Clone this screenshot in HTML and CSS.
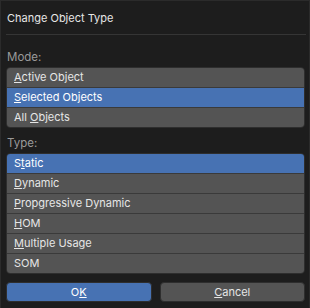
FILE: index.html
```html
<!DOCTYPE html>
<html lang="en">
<head>
    <meta charset="UTF-8">
    <meta name="viewport" content="width=device-width, initial-scale=1.0">
    <title>Change Object Type</title>
    <link rel="stylesheet" href="styles.css">
</head>
<body>
    <div class="dialog">
        <!-- Title -->
        <div class="dialog-title">Change Object Type</div>
        <div class="separator"></div>

        <!-- Mode -->
        <div class="section-label">Mode:</div>
        <div class="option-list">
            <div class="option"><u>A</u>ctive Object</div>
            <div class="option selected"><u>S</u>elected Objects</div>
            <div class="option">All <u>O</u>bjects</div>
        </div>

        <!-- Type -->
        <div class="section-label">Type:</div>
        <div class="option-list">
            <div class="option selected">S<u>t</u>atic</div>
            <div class="option"><u>D</u>ynamic</div>
            <div class="option"><u>P</u>ropgressive Dynamic</div>
            <div class="option"><u>H</u>OM</div>
            <div class="option"><u>M</u>ultiple Usage</div>
            <div class="option">SOM</div>
        </div>

        <!-- Buttons -->
        <div class="buttons">
            <button class="btn btn-ok">O<u>K</u></button>
            <button class="btn"><u>C</u>ancel</button>
        </div>
    </div>
</body>
</html>
```

FILE: styles.css
```css
body {
    margin: 0;
    background-color: #1d1d1d;
    font-family: Inter, "DejaVu Sans", sans-serif;
    font-size: 11px;
    color: #e6e6e6;
}

u {
    text-decoration: underline;
    text-decoration-thickness: 1px;
    text-underline-offset: 1px;
}

/* Popup window */
.dialog {
    box-sizing: border-box;
    width: 310px;
    height: 308px;
    border: 1px solid #2b2b2b;
    border-bottom: none;
    padding: 0 4px 0 5px;
}

.dialog-title {
    height: 33px;
    line-height: 34px;
    padding-left: 1px;
    font-size: 11px;
}

.separator {
    height: 1px;
    background-color: #353535;
    margin-right: -1px;
}

.section-label {
    height: 20px;
    line-height: 20px;
    margin-top: 12px;
    padding-left: 1px;
    color: #9a9a9a;
    font-size: 11.5px;
}

.option-list + .section-label {
    margin-top: 5px;
}

/* Lists */
.option-list {
    border: 1px solid #2e2e2e;
    border-radius: 4px;
    overflow: hidden;
}

.option {
    height: 19px;
    line-height: 19px;
    padding-left: 7px;
    background-color: #545454;
}

.option + .option {
    border-top: 1px solid #3a3a3a;
}

.option.selected {
    background-color: #4772b3;
    color: #ffffff;
}

/* Buttons */
.buttons {
    display: flex;
    gap: 8px;
    margin-top: 8px;
}

.btn {
    flex: 1;
    height: 20px;
    padding: 0;
    font-family: inherit;
    font-size: 11px;
    color: #e6e6e6;
    background-color: #545454;
    border: 1px solid #2e2e2e;
    border-radius: 4px;
}

.btn-ok {
    background-color: #4772b3;
    color: #ffffff;
}
```
